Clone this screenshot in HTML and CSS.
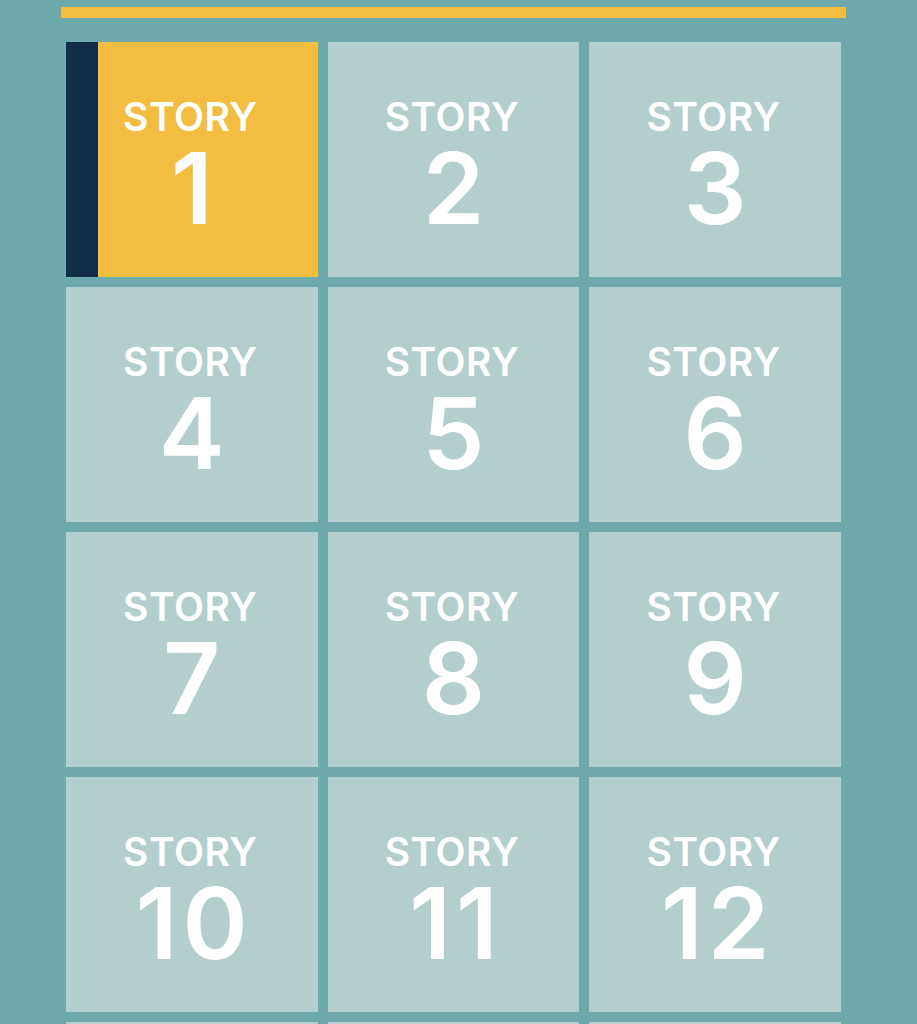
FILE: index.html
```html
<!DOCTYPE html>
<html>
<head>
    <meta charset="UTF-8">
    <title>Stories</title>
    <link rel="stylesheet" href="styles.css">
</head>
<body>
    <div class="page">
        <div class="topbar"></div>
        <div class="grid">
            <div class="tile current"><span class="label">STORY</span><span class="num">1</span></div>
            <div class="tile"><span class="label">STORY</span><span class="num">2</span></div>
            <div class="tile"><span class="label">STORY</span><span class="num">3</span></div>
            <div class="tile"><span class="label">STORY</span><span class="num">4</span></div>
            <div class="tile"><span class="label">STORY</span><span class="num">5</span></div>
            <div class="tile"><span class="label">STORY</span><span class="num">6</span></div>
            <div class="tile"><span class="label">STORY</span><span class="num">7</span></div>
            <div class="tile"><span class="label">STORY</span><span class="num">8</span></div>
            <div class="tile"><span class="label">STORY</span><span class="num">9</span></div>
            <div class="tile"><span class="label">STORY</span><span class="num">10</span></div>
            <div class="tile"><span class="label">STORY</span><span class="num">11</span></div>
            <div class="tile"><span class="label">STORY</span><span class="num">12</span></div>
            <div class="tile"><span class="label">STORY</span><span class="num">13</span></div>
            <div class="tile"><span class="label">STORY</span><span class="num">14</span></div>
            <div class="tile"><span class="label">STORY</span><span class="num">15</span></div>
        </div>
    </div>
</body>
</html>
```

FILE: styles.css
```css
html, body {
    margin: 0;
    padding: 0;
    background: #6eaaab;
}

.page {
    padding: 7px 0 40px 61px;
    width: 785px;
    font-family: "Inter", "Noto Sans", sans-serif;
}

.topbar {
    height: 11px;
    background: #f2bd40;
}

.grid {
    display: grid;
    grid-template-columns: repeat(3, 1fr);
    gap: 10px;
    margin: 24px 5px 0 5px;
}

.tile {
    height: 235px;
    background: #b4cdcd;
    color: #fff;
    display: flex;
    flex-direction: column;
    align-items: center;
    box-sizing: border-box;
    padding-top: 52px;
}

.tile.current {
    background: #f2bd40;
    border-left: 32px solid #132d46;
    padding-right: 32px;
}

.label {
    font-size: 39px;
    font-weight: 600;
    line-height: 46px;
    letter-spacing: 0.5px;
    margin-left: -3px;
}

.num {
    font-size: 99px;
    font-weight: 600;
    line-height: 96px;
    letter-spacing: 5px;
    margin-right: -5px;
}
```
